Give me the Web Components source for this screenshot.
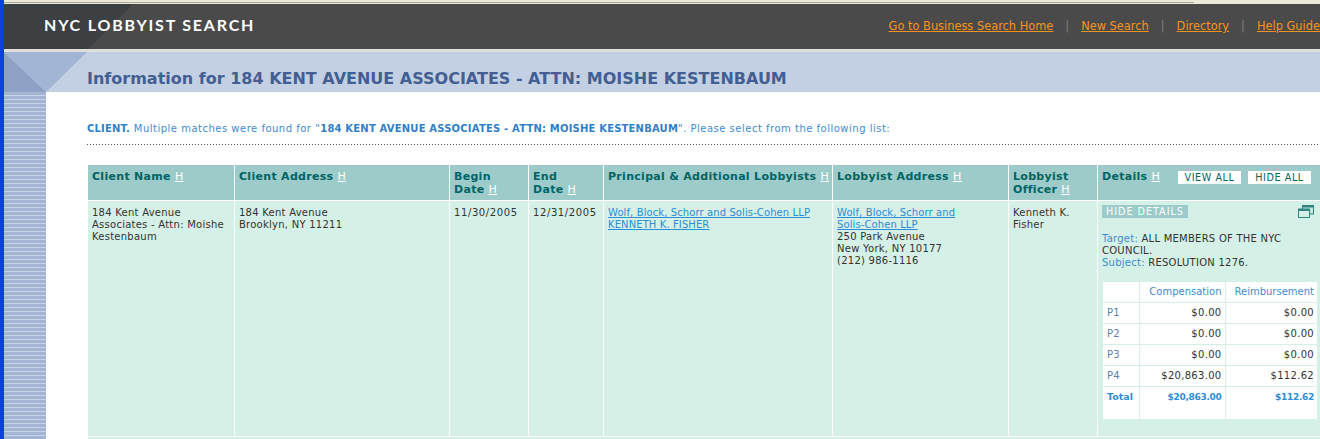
<!DOCTYPE html>
<html>
<head>
<meta charset="utf-8">
<title>NYC Lobbyist Search</title>
<style>
  html, body { margin: 0; padding: 0; background: #fff; overflow: hidden; }
</style>
</head>
<body>
<lobby-page></lobby-page>
<script>
// Top dark bar with the site name and the links.
class LobbyHeader extends HTMLElement {
    constructor() {
        super()
        this.attachShadow({ mode: 'open' });
        this.shadowRoot.innerHTML = `
        <style>
            :host {
                display: block;
                height: 45px;
                position: relative;
                background: #4a4a4a;
                border-bottom: 3px solid #dfded8;
                overflow: hidden;
            }
            svg { position: absolute; left: 0; top: 0; }
            #bar {
                position: relative;
                display: flex;
                align-items: center;
                justify-content: space-between;
                height: 44px;
                padding-left: 40px;
            }
            h1 {
                margin: -3px 0 0;
                font: bold 16px Lato, sans-serif;
                letter-spacing: 1.8px;
                color: #fff;
            }
            nav {
                display: flex;
                flex: none;
                font: 11.4px "DejaVu Sans", Verdana, sans-serif;
                color: #808080;
            }
            a { color: #f7941d; }
            span { margin: 0 12px; }
        </style>
        <svg width="140" height="45"><polygon points="0,0 129,0 84,45 0,45" fill="#3d4043"/></svg>
        <div id="bar">
            <h1>NYC LOBBYIST SEARCH</h1>
            <nav>
                <a href="#">Go to Business Search Home</a><span>|</span>
                <a href="#">New Search</a><span>|</span>
                <a href="#">Directory</a><span>|</span>
                <a href="#">Help Guide</a>
            </nav>
        </div>
        `
    }
}
customElements.define('lobby-header', LobbyHeader)

// Light blue band with the page title, the corner triangles are drawn in it.
class LobbyBand extends HTMLElement {
    constructor() {
        super()
        this.attachShadow({ mode: 'open' });
        this.shadowRoot.innerHTML = `
        <style>
            :host {
                display: flex;
                align-items: center;
                height: 40px;
                background: #c3d0e3;
            }
            svg { flex: none; }
            h2 {
                margin: 12px 0 0;
                font: bold 16px "DejaVu Sans", Verdana, sans-serif;
                color: #435e92;
                white-space: nowrap;
            }
        </style>
        <svg width="83" height="40">
            <polygon points="0,0 83,0 42,40" fill="#a3b5d4"/>
            <polygon points="0,0 42,40 0,40" fill="#8ea1c5"/>
        </svg>
        <h2><slot></slot></h2>
        `
    }
}
customElements.define('lobby-band', LobbyBand)

// Small table of amounts in the details cell.
class LobbyAmounts extends HTMLElement {
    constructor() {
        super()
        this.attachShadow({ mode: 'open' });
        const rows = [
            ['P1', '$0.00', '$0.00'],
            ['P2', '$0.00', '$0.00'],
            ['P3', '$0.00', '$0.00'],
            ['P4', '$20,863.00', '$112.62'],
        ]
        this.shadowRoot.innerHTML = `
        <style>
            :host { display: block; width: 214px; }
            table {
                width: 214px;
                table-layout: fixed;
                border-collapse: collapse;
                background: #fff;
                font: 10px/12px "DejaVu Sans", Verdana, sans-serif;
                letter-spacing: .3px;
                color: #333;
            }
            td, th {
                border: 1px solid #d5f0e6;
                padding: 0 3px;
                text-align: right;
                font-weight: normal;
                height: 20px;
            }
            table, tr:first-child td, tr:first-child th { border-top: none; }
            tr td:first-child, tr th:first-child { border-left: none; text-align: left; padding-left: 4px; color: #5c7fa8; }
            tr td:last-child, tr th:last-child { border-right: none; }
            tr:last-child td {
                border-bottom: none;
                height: 32px;
                vertical-align: top;
                padding-top: 4px;
                box-sizing: border-box;
                font-weight: bold;
                font-size: 9px;
                color: #2f8dd3;
                letter-spacing: -.3px;
            }
            tr:last-child td:first-child { color: #2f8dd3; font-size: 9.5px; letter-spacing: 0; }
            th { color: #3f8bd0; letter-spacing: 0; }
        </style>
        <table>
            <colgroup><col style="width:36px"><col style="width:86px"><col style="width:92px"></colgroup>
            <tr><th></th><th>Compensation</th><th>Reimbursement</th></tr>
            ${rows.map(r => `<tr><td>${r[0]}</td><td>${r[1]}</td><td>${r[2]}</td></tr>`).join('')}
            <tr><td>Total</td><td>$20,863.00</td><td>$112.62</td></tr>
        </table>
        `
    }
}
customElements.define('lobby-amounts', LobbyAmounts)

// Content of the last column: toggle, target, subject and amounts.
class LobbyDetails extends HTMLElement {
    constructor() {
        super()
        this.attachShadow({ mode: 'open' });
        this.shadowRoot.innerHTML = `
        <style>
            :host { display: block; width: 215px; margin-top: -2px; }
            #top { display: flex; justify-content: space-between; height: 13px; }
            #hide {
                background: #9ccbca;
                color: #fff;
                font-size: 9.6px;
                line-height: 13px;
                letter-spacing: 1px;
                padding: 0 4px;
            }
            svg { margin-right: 3px; }
            p { margin: 15px 10px 0 0; line-height: 12px; color: #333; }
            b { font-weight: normal; color: #3f8bd0; }
            lobby-amounts { margin: 13px 0 0 1px; }
        </style>
        <div id="top">
            <span id="hide">HIDE DETAILS</span>
            <svg width="16" height="13" viewBox="0 0 16 13" fill="#c4e6df" stroke="#2f8580">
                <rect x="4.5" y=".5" width="11" height="8.5"/>
                <path d="M4.5 1.5h11" stroke-width="2"/>
                <rect x=".5" y="4" width="11" height="8.5" fill="#d5f0e6"/>
                <path d="M.5 5h11" stroke-width="2"/>
            </svg>
        </div>
        <p><b>Target:</b> ALL MEMBERS OF THE NYC<br>COUNCIL.<br><b>Subject:</b> RESOLUTION 1276.</p>
        <lobby-amounts></lobby-amounts>
        `
    }
}
customElements.define('lobby-details', LobbyDetails)

// The result table.
class LobbyResults extends HTMLElement {
    constructor() {
        super()
        this.attachShadow({ mode: 'open' });
        this.shadowRoot.innerHTML = `
        <style>
            :host { display: block; }
            table {
                width: 1236px;
                table-layout: fixed;
                border-collapse: separate;
                border-spacing: 0;
                font: 10px/12px "DejaVu Sans", Verdana, sans-serif;
                letter-spacing: .25px;
                color: #333;
            }
            th, td {
                border-right: 1px solid #fff;
                border-bottom: 1px solid #fff;
                padding: 0 4px;
                text-align: left;
                vertical-align: top;
            }
            th {
                height: 36px;
                padding: 5px 0 0 4px;
                box-sizing: border-box;
                background: #9ccbca;
                color: #006464;
                font: bold 11px/13px "DejaVu Sans", Verdana, sans-serif;
                letter-spacing: .3px;
            }
            th a { color: #fff; font-weight: normal; }
            td {
                height: 236px;
                padding-top: 6px;
                box-sizing: border-box;
                background: #d5f0e6;
            }
            td a { color: #2f8dd3; letter-spacing: .1px; }
            .date { letter-spacing: .6px; }
            .nb { white-space: nowrap; }
            #details { white-space: nowrap; position: relative; }
            #buttons { position: absolute; left: 80px; top: 6px; display: flex; gap: 7px; }
            #buttons span {
                width: 63px;
                height: 13px;
                background: #fff;
                color: #006464;
                font: 9.6px/13px "DejaVu Sans", Verdana, sans-serif;
                letter-spacing: .6px;
                text-align: center;
            }
            #next td { height: 6px; padding: 0; border: none; }
        </style>
        <table>
            <colgroup>
                <col style="width:147px"><col style="width:215px"><col style="width:79px"><col style="width:75px">
                <col style="width:229px"><col style="width:176px"><col style="width:89px"><col style="width:226px">
            </colgroup>
            <tr>
                <th>Client Name <a href="#">H</a></th>
                <th>Client Address <a href="#">H</a></th>
                <th>Begin<br>Date <a href="#">H</a></th>
                <th>End<br>Date <a href="#">H</a></th>
                <th>Principal &amp; Additional Lobbyists <a href="#">H</a></th>
                <th>Lobbyist Address <a href="#">H</a></th>
                <th>Lobbyist<br>Officer <a href="#">H</a></th>
                <th id="details">Details <a href="#">H</a>
                    <div id="buttons"><span>VIEW ALL</span><span>HIDE ALL</span></div>
                </th>
            </tr>
            <tr>
                <td>184 Kent Avenue Associates - Attn: Moishe Kestenbaum</td>
                <td>184 Kent Avenue<br>Brooklyn, NY 11211</td>
                <td class="date">11/30/2005</td>
                <td class="date">12/31/2005</td>
                <td><a href="#">Wolf, Block, Schorr and Solis-Cohen LLP</a><br><a href="#">KENNETH K. FISHER</a></td>
                <td><a href="#">Wolf, Block, Schorr and <span class="nb">Solis-Cohen</span> LLP</a><br>250 Park Avenue<br>New York, NY 10177<br>(212) 986-1116</td>
                <td>Kenneth K. Fisher</td>
                <td><lobby-details></lobby-details></td>
            </tr>
            <tr id="next"><td></td><td></td><td></td><td></td><td></td><td></td><td></td><td></td></tr>
        </table>
        `
    }
}
customElements.define('lobby-results', LobbyResults)

// The whole page: window edge, header, band, striped column and content.
class LobbyPage extends HTMLElement {
    constructor() {
        super()
        this.attachShadow({ mode: 'open' });
        this.shadowRoot.innerHTML = `
        <style>
            :host {
                display: block;
                width: 1316px;
                height: 439px;
                overflow: hidden;
                border-left: 4px solid #0a3fe0;
                background: #fff;
            }
            #edge { height: 4px; box-sizing: border-box; padding-top: 2px; background: #ece9d8; }
            #edge div { width: 1190px; height: 1px; background: #aca899; }
            #body { display: flex; height: 347px; }
            #stripes {
                flex: none;
                width: 42px;
                background: repeating-linear-gradient(#a4b4d3 0 3px, #c8d2e6 3px 4px);
            }
            main { flex: 1; min-width: 0; padding: 30px 0 0 41px; }
            #intro {
                font: 10px/12px "DejaVu Sans", Verdana, sans-serif;
                letter-spacing: .5px;
                color: #3f8bd0;
                white-space: nowrap;
                padding-top: 1px;
            }
            #intro b { color: #2f80c8; letter-spacing: .19px; }
            #dots {
                height: 1px;
                margin: 9px -20px 0 0;
                background: repeating-linear-gradient(90deg, #555 0 1px, transparent 1px 3px);
            }
            lobby-results { margin: 20px 0 0 1px; }
        </style>
        <div id="edge"><div></div></div>
        <lobby-header></lobby-header>
        <lobby-band>Information for 184 KENT AVENUE ASSOCIATES - ATTN: MOISHE KESTENBAUM</lobby-band>
        <div id="body">
            <div id="stripes"></div>
            <main>
                <div id="intro"><b>CLIENT.</b> Multiple matches were found for "<b>184 KENT AVENUE ASSOCIATES - ATTN: MOISHE KESTENBAUM</b>". Please select from the following list:</div>
                <div id="dots"></div>
                <lobby-results></lobby-results>
            </main>
        </div>
        `
    }
}
customElements.define('lobby-page', LobbyPage)
</script>
</body>
</html>
